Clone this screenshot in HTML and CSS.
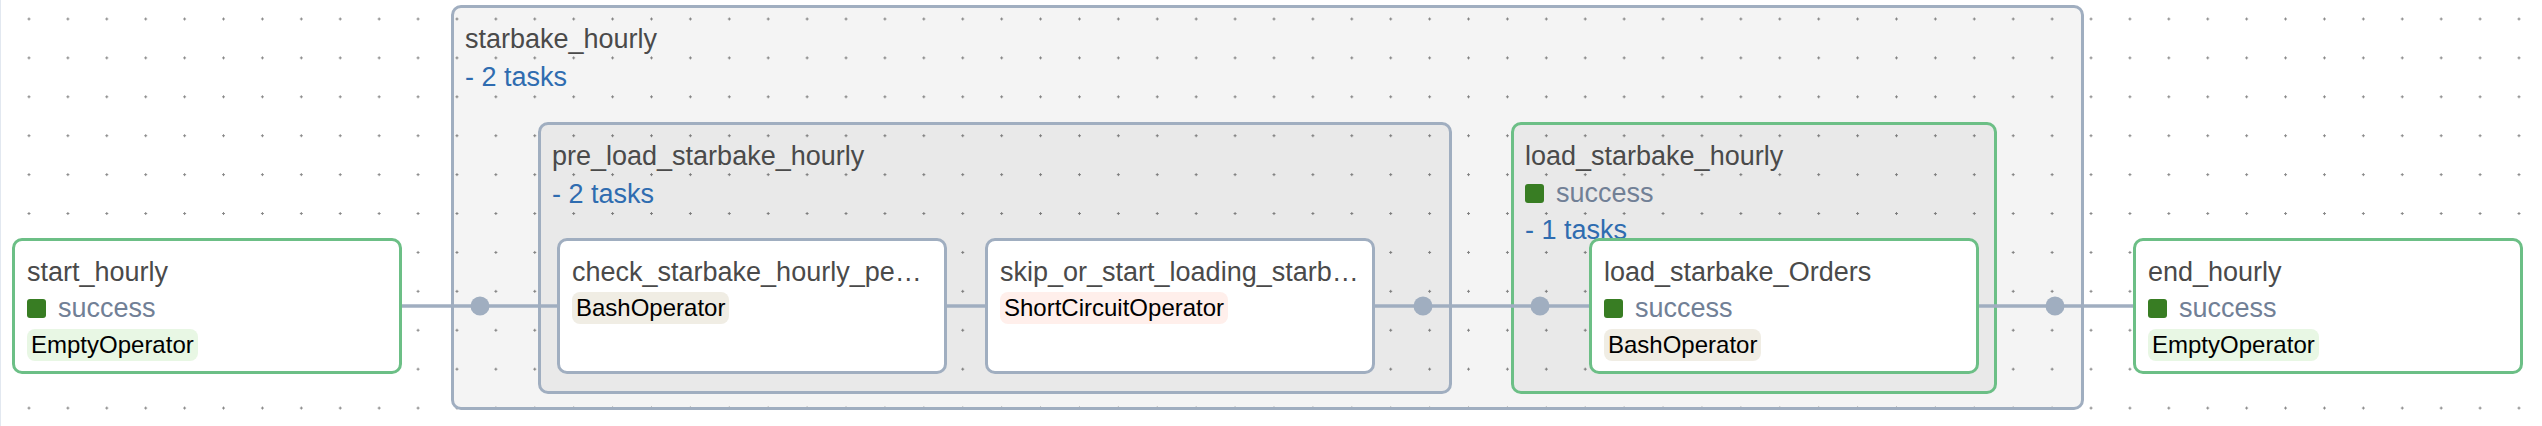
FILE: index.html
```html
<!DOCTYPE html>
<html lang="en">
<head>
<meta charset="utf-8">
<title>starbake_hourly graph</title>
<link rel="stylesheet" href="styles.css">
</head>
<body>
<div class="canvas">
  <div class="group g-outer">
    <div class="group-title">starbake_hourly</div>
    <div class="group-count">- 2 tasks</div>
  </div>
  <div class="group g-pre">
    <div class="group-title">pre_load_starbake_hourly</div>
    <div class="group-count">- 2 tasks</div>
  </div>
  <div class="group group--success g-load">
    <div class="group-title">load_starbake_hourly</div>
    <div class="status"><span class="status-dot"></span><span>success</span></div>
    <div class="group-count">- 1 tasks</div>
  </div>

  <svg class="edges" width="2542" height="426" viewBox="0 0 2542 426">
    <g stroke="#a0aec0" stroke-width="3.5" fill="none">
      <line x1="402" y1="306" x2="558" y2="306"/>
      <line x1="946" y1="306" x2="986" y2="306"/>
      <line x1="1374" y1="306" x2="1590" y2="306"/>
      <line x1="1976" y1="306" x2="2134" y2="306"/>
    </g>
    <g fill="#a0aec0">
      <circle cx="480" cy="306" r="9.5"/>
      <circle cx="1423" cy="306" r="9.5"/>
      <circle cx="1540" cy="306" r="9.5"/>
      <circle cx="2055" cy="306" r="9.5"/>
    </g>
  </svg>

  <div class="node node--success n-start">
    <div class="node-title">start_hourly</div>
    <div class="status"><span class="status-dot"></span><span>success</span></div>
    <div class="badge badge--empty">EmptyOperator</div>
  </div>
  <div class="node n-check">
    <div class="node-title">check_starbake_hourly_pe…</div>
    <div class="badge badge--bash">BashOperator</div>
  </div>
  <div class="node n-skip">
    <div class="node-title">skip_or_start_loading_starb…</div>
    <div class="badge badge--short">ShortCircuitOperator</div>
  </div>
  <div class="node node--success n-orders">
    <div class="node-title">load_starbake_Orders</div>
    <div class="status"><span class="status-dot"></span><span>success</span></div>
    <div class="badge badge--bash">BashOperator</div>
  </div>
  <div class="node node--success n-end">
    <div class="node-title">end_hourly</div>
    <div class="status"><span class="status-dot"></span><span>success</span></div>
    <div class="badge badge--empty">EmptyOperator</div>
  </div>
</div>
</body>
</html>
```

FILE: styles.css
```css
html, body {
  margin: 0;
  padding: 0;
  background: #ffffff;
}

body {
  font-family: "Liberation Sans", Arial, Helvetica, sans-serif;
}

.canvas {
  position: relative;
  width: 2542px;
  height: 426px;
  overflow: hidden;
  background-color: #ffffff;
  background-image: radial-gradient(circle, #888888 0, #888888 1px, transparent 1.3px);
  background-size: 38.92px 38.92px;
  background-position: 9.54px -0.46px;
  box-shadow: inset 1px 0 0 #e2e8f0;
}

/* ---------- groups ---------- */
.group {
  position: absolute;
  z-index: 0;
  box-sizing: border-box;
  border: 3px solid #a0aec0;
  border-radius: 10px;
  background: rgba(0, 0, 0, 0.045);
  padding: 12px 11px;
}

.group--success {
  border-color: #6cbf86;
}

.group-title {
  font-size: 27px;
  line-height: 38px;
  color: #4a4a4a;
  white-space: nowrap;
}

.group-count {
  font-size: 27px;
  line-height: 38px;
  color: #2f6cb0;
  white-space: nowrap;
}

.group--success .group-count {
  line-height: 36px;
}

.g-outer {
  left: 451px;
  top: 5px;
  width: 1633px;
  height: 405px;
}

.g-pre {
  left: 538px;
  top: 122px;
  width: 914px;
  height: 272px;
}

.g-load {
  left: 1511px;
  top: 122px;
  width: 486px;
  height: 272px;
}

/* ---------- edges ---------- */
.edges {
  position: absolute;
  left: 0;
  top: 0;
  z-index: 1;
}

/* ---------- task nodes ---------- */
.node {
  position: absolute;
  z-index: 2;
  top: 238px;
  width: 390px;
  height: 136px;
  box-sizing: border-box;
  border: 3px solid #a0aec0;
  border-radius: 10px;
  background: #ffffff;
  padding: 14px 12px 0;
}

.node--success {
  border-color: #6cbf86;
}

.node-title {
  font-size: 27px;
  line-height: 35px;
  color: #4a4a4a;
  white-space: nowrap;
  overflow: hidden;
}

.status {
  display: flex;
  align-items: center;
  gap: 12px;
  height: 37px;
  font-size: 27px;
  color: #718096;
  white-space: nowrap;
}

.status-dot {
  flex: none;
  width: 19px;
  height: 19px;
  border-radius: 3px;
  background: #387d23;
}

.badge {
  display: block;
  width: fit-content;
  margin-top: 2px;
  height: 32px;
  line-height: 32px;
  padding: 0 4px;
  border-radius: 8px;
  font-size: 24px;
  color: #000000;
  white-space: nowrap;
}

.badge--empty {
  background: #e8f7e4;
}

.badge--bash {
  background: #f0ede4;
}

.badge--short {
  background: #ffefeb;
}

.n-start {
  left: 12px;
}

.n-check {
  left: 557px;
}

.n-skip {
  left: 985px;
}

.n-orders {
  left: 1589px;
}

.n-end {
  left: 2133px;
}
```
